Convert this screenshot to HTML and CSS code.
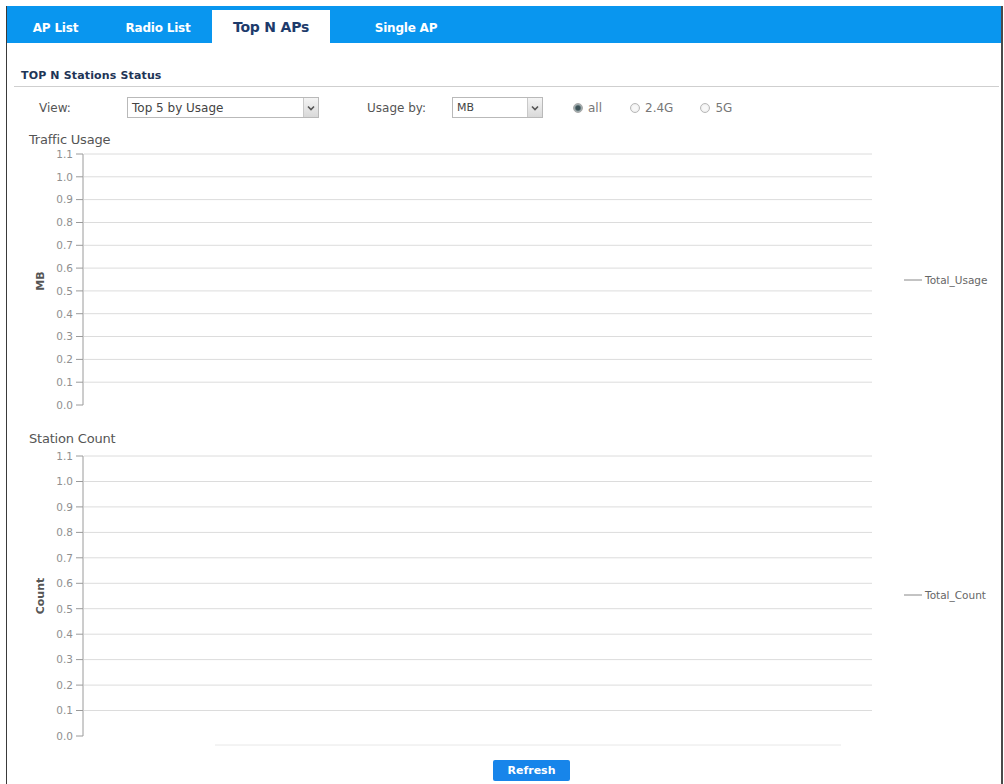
FILE: index.html
```html
<!DOCTYPE html>
<html lang="en">
<head>
  <meta charset="UTF-8" />
  <title>Top N APs</title>
  <link rel="stylesheet" href="styles.css">
</head>
<body>

  <div class="frame">
    <div class="tabs">
      <div class="tab tab-ap">AP List</div>
      <div class="tab tab-radio">Radio List</div>
      <div class="tab tab-top active">Top N APs</div>
      <div class="tab tab-single">Single AP</div>
    </div>

    <div class="content">
      <div class="section-title">TOP N Stations Status</div>

      <div class="filters">
        <span class="label label-view">View:</span>
        <div class="select select-view">
          <span class="select-text">Top 5 by Usage</span>
          <span class="select-arrow">
            <svg width="8" height="6" viewBox="0 0 8 6"><path d="M1 1.5 L4 4.5 L7 1.5" fill="none" stroke="#555" stroke-width="1.6"/></svg>
          </span>
        </div>
        <span class="label label-usage">Usage by:</span>
        <div class="select select-unit">
          <span class="select-text">MB</span>
          <span class="select-arrow">
            <svg width="8" height="6" viewBox="0 0 8 6"><path d="M1 1.5 L4 4.5 L7 1.5" fill="none" stroke="#555" stroke-width="1.6"/></svg>
          </span>
        </div>
        <label class="radio-item radio-all"><span class="radio on"></span>all</label>
        <label class="radio-item radio-24"><span class="radio"></span>2.4G</label>
        <label class="radio-item radio-5"><span class="radio"></span>5G</label>
      </div>

      <div class="chart chart-usage">
        <div class="chart-title">Traffic Usage</div>
        <svg class="chart-svg" width="994" height="268" viewBox="0 0 994 268">
          <g class="grid">
            <line x1="77" y1="6" x2="865" y2="6"/>
            <line x1="77" y1="28.8" x2="865" y2="28.8"/>
            <line x1="77" y1="51.6" x2="865" y2="51.6"/>
            <line x1="77" y1="74.5" x2="865" y2="74.5"/>
            <line x1="77" y1="97.3" x2="865" y2="97.3"/>
            <line x1="77" y1="120.1" x2="865" y2="120.1"/>
            <line x1="77" y1="142.9" x2="865" y2="142.9"/>
            <line x1="77" y1="165.7" x2="865" y2="165.7"/>
            <line x1="77" y1="188.5" x2="865" y2="188.5"/>
            <line x1="77" y1="211.4" x2="865" y2="211.4"/>
            <line x1="77" y1="234.2" x2="865" y2="234.2"/>
          </g>
          <g class="axis">
            <line x1="76" y1="6" x2="76" y2="257"/>
            <line x1="69" y1="6" x2="76" y2="6"/>
            <line x1="69" y1="28.8" x2="76" y2="28.8"/>
            <line x1="69" y1="51.6" x2="76" y2="51.6"/>
            <line x1="69" y1="74.5" x2="76" y2="74.5"/>
            <line x1="69" y1="97.3" x2="76" y2="97.3"/>
            <line x1="69" y1="120.1" x2="76" y2="120.1"/>
            <line x1="69" y1="142.9" x2="76" y2="142.9"/>
            <line x1="69" y1="165.7" x2="76" y2="165.7"/>
            <line x1="69" y1="188.5" x2="76" y2="188.5"/>
            <line x1="69" y1="211.4" x2="76" y2="211.4"/>
            <line x1="69" y1="234.2" x2="76" y2="234.2"/>
            <line x1="69" y1="257" x2="76" y2="257"/>
          </g>
          <g class="ticks">
            <text x="66" y="9.8">1.1</text>
            <text x="66" y="32.6">1.0</text>
            <text x="66" y="55.4">0.9</text>
            <text x="66" y="78.3">0.8</text>
            <text x="66" y="101.1">0.7</text>
            <text x="66" y="123.9">0.6</text>
            <text x="66" y="146.7">0.5</text>
            <text x="66" y="169.5">0.4</text>
            <text x="66" y="192.3">0.3</text>
            <text x="66" y="215.2">0.2</text>
            <text x="66" y="238">0.1</text>
            <text x="66" y="260.8">0.0</text>
          </g>
          <text class="axis-title" transform="translate(37 133) rotate(-90)">MB</text>
          <line class="legend-line" x1="897" y1="132" x2="915" y2="132"/>
          <text class="legend-text" x="918" y="136">Total_Usage</text>
        </svg>
      </div>

      <div class="chart chart-count">
        <div class="chart-title">Station Count</div>
        <svg class="chart-svg" width="994" height="302" viewBox="0 0 994 302">
          <g class="grid">
            <line x1="77" y1="9" x2="865" y2="9"/>
            <line x1="77" y1="34.5" x2="865" y2="34.5"/>
            <line x1="77" y1="59.9" x2="865" y2="59.9"/>
            <line x1="77" y1="85.4" x2="865" y2="85.4"/>
            <line x1="77" y1="110.8" x2="865" y2="110.8"/>
            <line x1="77" y1="136.3" x2="865" y2="136.3"/>
            <line x1="77" y1="161.7" x2="865" y2="161.7"/>
            <line x1="77" y1="187.2" x2="865" y2="187.2"/>
            <line x1="77" y1="212.6" x2="865" y2="212.6"/>
            <line x1="77" y1="238.1" x2="865" y2="238.1"/>
            <line x1="77" y1="263.5" x2="865" y2="263.5"/>
          </g>
          <g class="axis">
            <line x1="76" y1="9" x2="76" y2="289"/>
            <line x1="69" y1="9" x2="76" y2="9"/>
            <line x1="69" y1="34.5" x2="76" y2="34.5"/>
            <line x1="69" y1="59.9" x2="76" y2="59.9"/>
            <line x1="69" y1="85.4" x2="76" y2="85.4"/>
            <line x1="69" y1="110.8" x2="76" y2="110.8"/>
            <line x1="69" y1="136.3" x2="76" y2="136.3"/>
            <line x1="69" y1="161.7" x2="76" y2="161.7"/>
            <line x1="69" y1="187.2" x2="76" y2="187.2"/>
            <line x1="69" y1="212.6" x2="76" y2="212.6"/>
            <line x1="69" y1="238.1" x2="76" y2="238.1"/>
            <line x1="69" y1="263.5" x2="76" y2="263.5"/>
            <line x1="69" y1="289" x2="76" y2="289"/>
          </g>
          <g class="ticks">
            <text x="66" y="12.8">1.1</text>
            <text x="66" y="38.3">1.0</text>
            <text x="66" y="63.7">0.9</text>
            <text x="66" y="89.2">0.8</text>
            <text x="66" y="114.6">0.7</text>
            <text x="66" y="140.1">0.6</text>
            <text x="66" y="165.5">0.5</text>
            <text x="66" y="191">0.4</text>
            <text x="66" y="216.4">0.3</text>
            <text x="66" y="241.9">0.2</text>
            <text x="66" y="267.3">0.1</text>
            <text x="66" y="292.8">0.0</text>
          </g>
          <text class="axis-title" transform="translate(37 149) rotate(-90)">Count</text>
          <line class="legend-line" x1="897" y1="148" x2="915" y2="148"/>
          <text class="legend-text" x="918" y="152">Total_Count</text>
          <line class="x-axis" x1="208" y1="298" x2="834" y2="298"/>
        </svg>
      </div>

      <div class="actions">
        <button class="btn-refresh" type="button">Refresh</button>
      </div>
    </div>
  </div>

</body>
</html>
```

FILE: styles.css
```css
body {
  margin: 0;
  padding: 0;
  background: #ffffff;
  font-family: "DejaVu Sans", "Liberation Sans", sans-serif;
  color: #555;
}

.frame {
  box-sizing: border-box;
  margin: 6px 0 0 6px;
  width: 997px;
  height: 778px;
  border-left: 1px solid #3a3a3a;
  border-right: 2px solid #4a4a4a;
  overflow: hidden;
}

/* tab bar */
.tabs {
  display: flex;
  align-items: flex-end;
  height: 37px;
  background: #0996ef;
}

.tab {
  display: flex;
  align-items: center;
  justify-content: center;
  height: 33px;
  padding-top: 3px;
  box-sizing: border-box;
  color: #ffffff;
  font-weight: bold;
  font-size: 12px;
  letter-spacing: -0.2px;
}

.tab-ap { width: 97px; }
.tab-radio { width: 108px; }
.tab-top { width: 118px; }
.tab-single { width: 152px; }

.tab.active {
  background: #ffffff;
  color: #1d3b6b;
  font-size: 14px;
  padding-top: 0;
}

/* content */
.content {
  padding-top: 23px;
}

.section-title {
  margin: 0 2px 0 7px;
  padding-left: 7px;
  height: 20px;
  line-height: 20px;
  border-bottom: 1px solid #cfcfcf;
  font-size: 11px;
  font-weight: bold;
  color: #1f3556;
  letter-spacing: 0.15px;
}

.filters {
  display: flex;
  align-items: center;
  height: 21px;
  margin-top: 10px;
  padding-left: 32px;
  font-size: 12px;
}

.label {
  color: #555;
}

.label-view { width: 88px; }
.label-usage { width: 85px; margin-left: 48px; }

.select {
  display: flex;
  align-items: stretch;
  box-sizing: border-box;
  height: 21px;
  border: 1px solid #b9b9b9;
  background: #fff;
}

.select-view { width: 192px; }
.select-unit { width: 91px; }

.select-text {
  flex: 1;
  padding-left: 4px;
  line-height: 20px;
  color: #444;
}

.select-unit .select-text {
  font-size: 11px;
}

.select-arrow {
  display: flex;
  align-items: center;
  justify-content: center;
  width: 14px;
  background: linear-gradient(#f4f4f4, #d9d9d9);
  border-left: 1px solid #c9c9c9;
}

.radio-item {
  display: flex;
  align-items: center;
  color: #777;
  font-size: 12px;
}

.radio-all { margin-left: 30px; }
.radio-24 { margin-left: 28px; }
.radio-5 { margin-left: 27px; }

.radio {
  box-sizing: border-box;
  width: 10px;
  height: 10px;
  margin-right: 5px;
  border-radius: 50%;
  border: 1px solid #b8b8b8;
  background: radial-gradient(circle, #f8f8f8 40%, #e2e2e2 100%);
}

.radio.on {
  background: radial-gradient(circle, #3d5358 35%, #9aa8aa 60%, #d7d7d7 100%);
  border-color: #a8a8a8;
}

/* charts */
.chart-title {
  padding-left: 22px;
  height: 16px;
  line-height: 16px;
  font-size: 13px;
  color: #555;
  letter-spacing: -0.2px;
}

.chart-usage { margin-top: 14px; }
.chart-count { margin-top: 15px; }

.chart-svg {
  display: block;
}

.grid line {
  stroke: #dcdcdc;
  stroke-width: 1;
}

.axis line {
  stroke: #9a9a9a;
  stroke-width: 1;
}

.ticks text {
  font-family: "DejaVu Sans", sans-serif;
  font-size: 10.5px;
  fill: #909090;
  text-anchor: end;
}

.axis-title {
  font-family: "DejaVu Sans", sans-serif;
  font-size: 11px;
  font-weight: bold;
  fill: #555;
  text-anchor: middle;
}

.legend-line {
  stroke: #888;
  stroke-width: 1;
}

.legend-text {
  font-family: "DejaVu Sans", sans-serif;
  font-size: 10.5px;
  fill: #666;
}

.x-axis {
  stroke: #e8e8e8;
  stroke-width: 1;
}

.actions {
  padding-left: 486px;
  margin-top: 10px;
}

.btn-refresh {
  width: 77px;
  height: 21px;
  padding: 0;
  border: none;
  border-radius: 2px;
  background: #1785ea;
  color: #ffffff;
  font-family: "DejaVu Sans", sans-serif;
  font-size: 11px;
  font-weight: bold;
  cursor: pointer;
}
```
